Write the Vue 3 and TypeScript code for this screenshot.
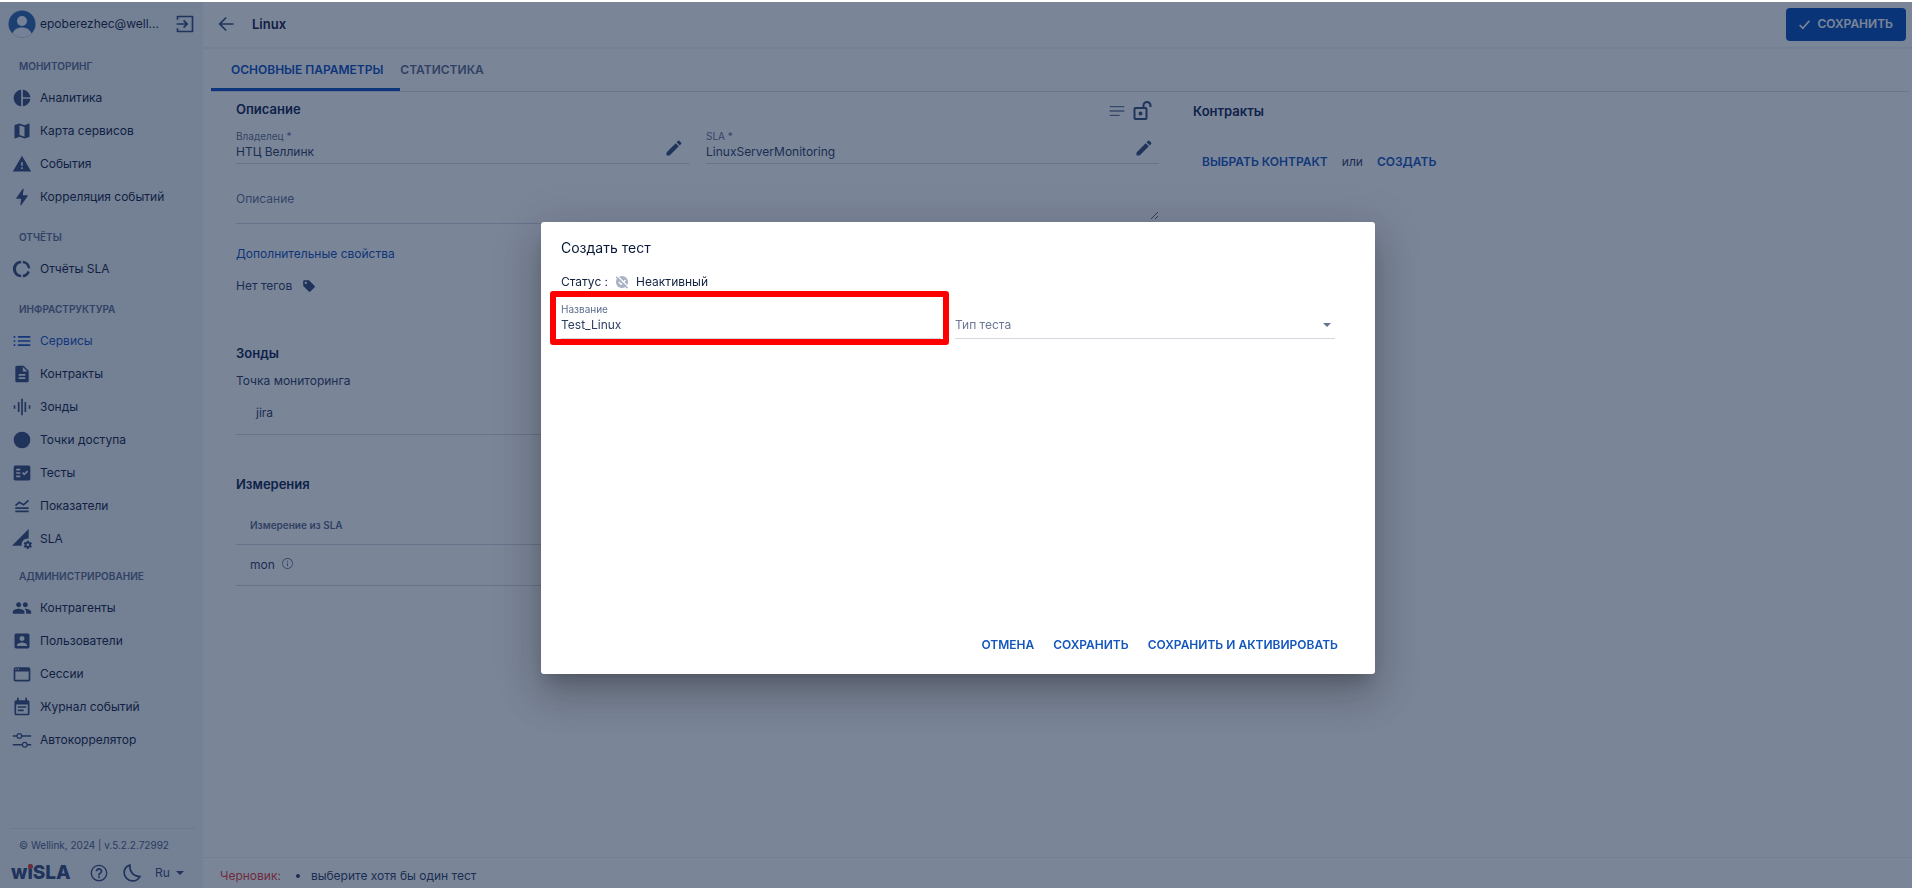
<script setup lang="ts">
import { ref } from 'vue'

interface NavItem {
  label: string
  icon: string
  active?: boolean
}
interface NavGroup {
  title: string
  items: NavItem[]
}

const icons: Record<string, string> = {
  pie: 'M11 2v20c-5.07-.5-9-4.79-9-10s3.93-9.5 9-10zm2.03 0v8.99H22c-.47-4.74-4.24-8.52-8.97-8.99zm0 11.01V22c4.74-.47 8.5-4.25 8.97-8.99h-8.97z',
  map: 'M20.5 3l-.16.03L15 5.1 9 3 3.36 4.9c-.21.07-.36.25-.36.48V20.5c0 .28.22.5.5.5l.16-.03L9 18.9l6 2.1 5.64-1.9c.21-.07.36-.25.36-.48V3.5c0-.28-.22-.5-.5-.5zM15 19l-6-2.11V5l6 2.11V19z',
  warning: 'M1 21h22L12 2 1 21zm12-3h-2v-2h2v2zm0-4h-2v-4h2v4z',
  bolt: 'M11 22h-1l1-8H5.500c-.6 0-.6-.4-.4-.8L13 2h1l-1 8h5.500c.5 0 .6.4.4.7z',
  donut: 'M11 2v3.050A7 7 0 0 0 11 18.950V22A10 10 0 0 1 11 2zM13 2A10 10 0 0 1 22 11h-3.050A7 7 0 0 0 13 5.050zM13 22v-3.050A7 7 0 0 0 18.500 14.500l2.900 1A10 10 0 0 1 13 22z',
  list: 'M2 13h2v-2H2v2zm0 5h2v-2H2v2zM2 8h2V6H2v2zm5 5h15v-2H7v2zm0 5h15v-2H7v2zM7 6v2h15V6H7z',
  doc: 'M14 2H6c-1.1 0-1.990.9-1.990 2L4 20c0 1.1.89 2 1.990 2H18c1.1 0 2-.9 2-2V8l-6-6zm2 16H8v-2h8v2zm0-4H8v-2h8v2zm-3-5V3.500L18.500 9H13z',
  eq: 'M7 18h2V6H7v12zm4 4h2V2h-2v20zm-9-8h2v-4H2v4zm13 4h2V6h-2v12zm5-8v4h2v-4h-2z',
  circle: 'M12 2a10 10 0 1 0 0 20 10 10 0 0 0 0-20z',
  check: 'M20 3H4c-1.1 0-2 .9-2 2v14c0 1.1.9 2 2 2h16c1.1 0 2-.9 2-2V5c0-1.1-.9-2-2-2zM10 17H5v-2h5v2zm0-4H5v-2h5v2zm0-4H5V7h5v2zm4.820 6L12 12.160l1.410-1.410 1.410 1.420L17.990 9l1.420 1.420L14.820 15z',
  metrics: 'M4 17.500h16v2H4zM4 13.500h16v2H4zM4.800 12.200 3.500 10.700 8.700 6.300l5 2.900L19.200 4.500l1.300 1.500-6.500 5.600-5.100-2.900z',
  signal: 'M18.990 11.500c.34 0 .67.03 1 .07L20 0 0 20h11.560c-.04-.33-.07-.66-.07-1 0-4.140 3.360-7.500 7.500-7.500zm3.710 7.990c.02-.16.04-.32.04-.49 0-.17-.01-.33-.04-.49l1.060-.83c.09-.08.12-.21.06-.32l-1-1.730c-.06-.11-.19-.15-.31-.11l-1.240.5c-.26-.2-.54-.37-.85-.49l-.19-1.320c-.01-.12-.12-.21-.24-.21h-2c-.12 0-.23.09-.25.21l-.19 1.320c-.3.13-.59.29-.85.49l-1.240-.5c-.11-.04-.24 0-.31.11l-1 1.730c-.06.11-.04.24.06.32l1.060.83c-.02.16-.03.32-.03.49 0 .17.01.33.03.49l-1.060.83c-.09.08-.12.21-.06.32l1 1.730c.06.11.19.15.31.11l1.240-.5c.26.2.54.37.85.49l.19 1.320c.02.12.12.21.25.21h2c.12 0 .23-.09.25-.21l.19-1.320c.3-.13.59-.29.84-.49l1.250.5c.11.04.24 0 .31-.11l1-1.730c.06-.11.03-.24-.06-.32l-1.070-.83zm-3.710 1.010c-.83 0-1.500-.67-1.500-1.500s.67-1.500 1.500-1.500 1.500.67 1.500 1.500-.67 1.500-1.500 1.500z',
  group: 'M16 11c1.660 0 2.990-1.340 2.990-3S17.660 5 16 5c-1.660 0-3 1.340-3 3s1.340 3 3 3zm-8 0c1.660 0 2.990-1.340 2.990-3S9.660 5 8 5C6.340 5 5 6.340 5 8s1.340 3 3 3zm0 2c-2.330 0-7 1.170-7 3.500V19h14v-2.500c0-2.330-4.670-3.500-7-3.500zm8 0c-.29 0-.62.02-.97.05 1.160.84 1.970 1.970 1.970 3.450V19h6v-2.500c0-2.330-4.670-3.500-7-3.500z',
  user: 'M3 5v14c0 1.1.89 2 2 2h14c1.1 0 2-.9 2-2V5c0-1.1-.9-2-2-2H5c-1.110 0-2 .9-2 2zm12 4c0 1.660-1.340 3-3 3s-3-1.340-3-3 1.340-3 3-3 3 1.340 3 3zm-9 8c0-2 4-3.100 6-3.100s6 1.1 6 3.100v1H6v-1z',
  window: 'M20 4H4c-1.100 0-2 .9-2 2v13c0 1.100.9 2 2 2h16c1.100 0 2-.9 2-2V6c0-1.100-.9-2-2-2zM4 5.500h1.500V7H4zM7 5.500h1.500V7H7zM20 19H4V9h16z',
  calendar: 'M19 4h-1V1h-2v3H8V1H6v3H5c-1.100 0-2 .9-2 2v14c0 1.100.9 2 2 2h14c1.100 0 2-.9 2-2V6c0-1.100-.9-2-2-2zm0 16H5V9h14zM7 11h10v2H7zM7 15h7v2H7z',
  sliders: 'M1 6.200h4.200a3.800 3.800 0 0 1 7.300 0H23v1.800H12.500a3.800 3.800 0 0 1-7.300 0H1zM8.800 5a2.100 2.100 0 1 0 0 4.200 2.100 2.100 0 0 0 0-4.200zM1 16.700h10.700a3.800 3.800 0 0 1 7.300 0h4v1.800h-4a3.800 3.800 0 0 1-7.300 0H1zM15.300 15.500a2.100 2.100 0 1 0 0 4.200 2.100 2.100 0 0 0 0-4.200z',
  logout: 'M3 2h18c.6 0 1 .4 1 1v18c0 .6-.4 1-1 1H3c-.6 0-1-.4-1-1v-4h2v3h16V4H4v3H2V3c0-.6.4-1 1-1zM2 11h10.200L9.600 8.400 11 7l5 5-5 5-1.400-1.400 2.600-2.600H2z',
  back: 'M21 11H6.830l6.090-6.090L11.500 3.500 3 12l8.500 8.500 1.410-1.410L6.830 13H21v-2z',
  edit: 'M3 17.250V21h3.750L17.810 9.940l-3.750-3.750L3 17.250zM20.710 7.040c.39-.39.39-1.020 0-1.410l-2.340-2.340c-.39-.39-1.020-.39-1.410 0l-1.830 1.830 3.750 3.750 1.830-1.830z',
  help: 'M11 18h2v-2h-2v2zm1-16C6.480 2 2 6.480 2 12s4.480 10 10 10 10-4.480 10-10S17.520 2 12 2zm0 18.400c-4.600 0-8.400-3.800-8.400-8.400s3.800-8.400 8.400-8.400 8.400 3.800 8.400 8.400-3.800 8.400-8.400 8.400zM12 6c-2.210 0-4 1.790-4 4h2c0-1.100.9-2 2-2s2 .9 2 2c0 2-3 1.750-3 5h2c0-2.250 3-2.500 3-5 0-2.210-1.790-4-4-4z',
  info: 'M11 17h2v-6h-2v6zm1-15C6.480 2 2 6.480 2 12s4.480 10 10 10 10-4.480 10-10S17.520 2 12 2zm0 18.500c-4.700 0-8.500-3.800-8.500-8.500S7.300 3.500 12 3.500s8.500 3.800 8.500 8.500-3.800 8.500-8.500 8.500zM11 9h2V7h-2v2z',
  tag: 'M21.410 11.580l-9-9C12.050 2.220 11.550 2 11 2H4c-1.100 0-2 .9-2 2v7c0 .55.22 1.050.59 1.420l9 9c.36.36.86.58 1.410.58.55 0 1.050-.22 1.410-.59l7-7c.37-.36.59-.86.59-1.410 0-.55-.23-1.060-.59-1.420zM6.500 8.500a2 2 0 1 1 0-4 2 2 0 0 1 0 4z',
}

const groups: NavGroup[] = [
  {
    title: 'МОНИТОРИНГ',
    items: [
      { label: 'Аналитика', icon: 'pie' },
      { label: 'Карта сервисов', icon: 'map' },
      { label: 'События', icon: 'warning' },
      { label: 'Корреляция событий', icon: 'bolt' },
    ],
  },
  { title: 'ОТЧЁТЫ', items: [{ label: 'Отчёты SLA', icon: 'donut' }] },
  {
    title: 'ИНФРАСТРУКТУРА',
    items: [
      { label: 'Сервисы', icon: 'list', active: true },
      { label: 'Контракты', icon: 'doc' },
      { label: 'Зонды', icon: 'eq' },
      { label: 'Точки доступа', icon: 'circle' },
      { label: 'Тесты', icon: 'check' },
      { label: 'Показатели', icon: 'metrics' },
      { label: 'SLA', icon: 'signal' },
    ],
  },
  {
    title: 'АДМИНИСТРИРОВАНИЕ',
    items: [
      { label: 'Контрагенты', icon: 'group' },
      { label: 'Пользователи', icon: 'user' },
      { label: 'Сессии', icon: 'window' },
      { label: 'Журнал событий', icon: 'calendar' },
      { label: 'Автокоррелятор', icon: 'sliders' },
    ],
  },
]

const owner = ref('НТЦ Веллинк')
const sla = ref('LinuxServerMonitoring')
const description = ref('')
const testName = ref('Test_Linux')
const testType = ref('')
</script>

<template>
  <div class="page">
    <aside class="sidebar">
      <div class="account">
        <svg class="avatar" viewBox="0 0 28 28" aria-hidden="true">
          <circle cx="14" cy="14" r="13.500" fill="#2f66ad" />
          <circle cx="14" cy="11" r="5" fill="#f2f5fa" />
          <path d="M4.500 23.500c1.500-4 5-6 9.500-6s8 2 9.500 6a13.500 13.500 0 0 1-19 0z" fill="#f2f5fa" />
        </svg>
        <span class="email">epoberezhec@well...</span>
        <button class="icon-btn" type="button" aria-label="Выйти">
          <svg class="icon" viewBox="0 0 24 24"><path :d="icons.logout" /></svg>
        </button>
      </div>

      <nav class="nav">
        <section v-for="g in groups" :key="g.title" class="nav-group">
          <h2 class="nav-title">{{ g.title }}</h2>
          <a v-for="i in g.items" :key="i.label" href="#" class="nav-item" :class="{ active: i.active }">
            <svg class="icon nav-icon" viewBox="0 0 24 24" fill-rule="evenodd" aria-hidden="true"><path :d="icons[i.icon]" /></svg>
            <span>{{ i.label }}</span>
          </a>
        </section>
      </nav>

      <footer class="side-footer">
        <p class="copyright">© Wellink, 2024 | v.5.2.2.72992</p>
        <div class="tools">
          <span class="logo">w<span class="logo-i">i</span>SLA</span>
          <button class="icon-btn" type="button" aria-label="Справка">
            <svg class="icon" viewBox="0 0 24 24"><path :d="icons.help" /></svg>
          </button>
          <button class="icon-btn moon" type="button" aria-label="Тёмная тема">
            <svg class="icon outline" viewBox="0 0 24 24"><path d="M9.500 2.600C8.700 9.500 13 15.800 21.500 16.300 19.500 19.800 16 21.600 12.500 21.500 7 21.300 2.600 17 2.600 11.700c0-4.100 2.800-7.800 6.900-9.100z" /></svg>
          </button>
          <button class="lang" type="button">Ru<span class="caret"></span></button>
        </div>
      </footer>
    </aside>

    <main class="main">
      <header class="topbar">
        <button class="icon-btn" type="button" aria-label="Назад">
          <svg class="icon back" viewBox="0 0 24 24"><path :d="icons.back" /></svg>
        </button>
        <h1 class="page-title">Linux</h1>
        <button class="save" type="button">
          <svg class="save-icon" viewBox="0 0 24 24" aria-hidden="true"><path d="M3 13l6 6L21 5" /></svg>СОХРАНИТЬ
        </button>
      </header>

      <div class="tabs" role="tablist">
        <button class="tab selected" role="tab" aria-selected="true" type="button">ОСНОВНЫЕ ПАРАМЕТРЫ</button>
        <button class="tab" role="tab" aria-selected="false" type="button">СТАТИСТИКА</button>
      </div>

      <div class="content">
        <div class="details">
          <div class="section-head">
            <h2 class="section-title">Описание</h2>
            <div class="section-actions">
              <button class="icon-btn" type="button" aria-label="Список">
                <svg class="icon muted" viewBox="0 0 24 24"><path d="M1 4.500h22v2H1zM1 11h22v2H1zM1 17.500h15v2H1z" /></svg>
              </button>
              <button class="icon-btn" type="button" aria-label="Разблокировано">
                <svg class="lock outline" viewBox="0 0 20 20"><rect x="1.500" y="7" width="12" height="11" rx="1" /><path d="M10.500 7V4.500a3.500 3.500 0 0 1 7 0V6" /><circle cx="7.500" cy="12.500" r="1" /></svg>
              </button>
            </div>
          </div>

          <div class="pair">
            <div class="field">
              <label for="owner">Владелец *</label>
              <input id="owner" v-model="owner" type="text" />
              <button class="icon-btn edit" type="button" aria-label="Изменить владельца">
                <svg viewBox="0 0 24 24"><path :d="icons.edit" /></svg>
              </button>
            </div>
            <div class="field">
              <label for="sla">SLA *</label>
              <input id="sla" v-model="sla" type="text" />
              <button class="icon-btn edit" type="button" aria-label="Изменить SLA">
                <svg viewBox="0 0 24 24"><path :d="icons.edit" /></svg>
              </button>
            </div>
          </div>

          <div class="field description">
            <textarea v-model="description" aria-label="Описание" placeholder="Описание"></textarea>
          </div>

          <a href="#" class="more">Дополнительные свойства</a>
          <div class="tags">
            <span>Нет тегов</span>
            <button class="icon-btn" type="button" aria-label="Добавить тег">
              <svg class="tag" viewBox="0 0 24 24" fill-rule="evenodd"><path :d="icons.tag" /></svg>
            </button>
          </div>

          <section class="probes">
            <h2 class="section-title">Зонды</h2>
            <p class="probe-label">Точка мониторинга</p>
            <p class="probe">jira</p>
          </section>

          <section>
            <h2 class="section-title">Измерения</h2>
            <table class="measures">
              <thead>
                <tr><th scope="col">Измерение из SLA</th></tr>
              </thead>
              <tbody>
                <tr>
                  <td>
                    <div class="measure">
                      mon<svg class="info" viewBox="0 0 24 24" aria-hidden="true"><path :d="icons.info" /></svg>
                    </div>
                  </td>
                </tr>
              </tbody>
            </table>
          </section>
        </div>

        <section class="contracts">
          <h2 class="section-title">Контракты</h2>
          <div class="contract-actions">
            <button class="text-btn" type="button">ВЫБРАТЬ КОНТРАКТ</button>
            <span>или</span>
            <button class="text-btn" type="button">СОЗДАТЬ</button>
          </div>
        </section>
      </div>

      <footer class="draft">
        <span class="draft-label">Черновик:</span>
        <ul>
          <li>выберите хотя бы один тест</li>
        </ul>
      </footer>
    </main>

    <div class="backdrop">
      <div class="dialog" role="dialog" aria-modal="true" aria-labelledby="dialog-title">
        <h2 id="dialog-title" class="dialog-title">Создать тест</h2>
        <div class="status">
          <span>Статус :</span>
          <svg class="status-icon" viewBox="0 0 24 24" aria-hidden="true">
            <circle cx="12" cy="12" r="10.500" fill="#a9b3c4" />
            <path d="M6.500 12l4 4L18 8.500" fill="none" stroke="#fff" stroke-width="2.400" />
            <path d="M4 1.500L23 20.500" stroke="#fff" stroke-width="2.400" />
            <path d="M2 3l19.500 19.500" stroke="#a9b3c4" stroke-width="2.600" />
          </svg>
          <span>Неактивный</span>
        </div>
        <div class="dialog-fields">
          <div class="field highlighted">
            <label for="test-name">Название</label>
            <input id="test-name" v-model="testName" type="text" />
          </div>
          <div class="field select-field">
            <select v-model="testType" aria-label="Тип теста">
              <option value="" disabled>Тип теста</option>
            </select>
            <span class="caret"></span>
          </div>
        </div>
        <div class="dialog-actions">
          <button class="text-btn" type="button">ОТМЕНА</button>
          <button class="text-btn" type="button">СОХРАНИТЬ</button>
          <button class="text-btn" type="button">СОХРАНИТЬ И АКТИВИРОВАТЬ</button>
        </div>
      </div>
    </div>
  </div>
</template>

<style>
body {
  margin: 0;
  background: #fff;
}
</style>

<style scoped>
* {
  box-sizing: border-box;
}
.page {
  display: flex;
  min-height: 100vh;
  padding-top: 2px;
  font-family: Inter, 'Liberation Sans', sans-serif;
  font-size: 12px;
  line-height: 16px;
  color: #2b3d63;
}
h1,
h2,
p,
ul {
  margin: 0;
  padding: 0;
}
button,
input,
select,
textarea {
  font: inherit;
  color: inherit;
  border: 0;
  background: none;
  padding: 0;
  margin: 0;
  outline: 0;
}
a {
  color: inherit;
  text-decoration: none;
}
svg {
  display: block;
  fill: currentColor;
}
.icon-btn {
  display: flex;
  color: #344a78;
}
.icon {
  width: 20px;
  height: 20px;
}
.outline {
  fill: none;
  stroke: currentColor;
  stroke-width: 2;
}

/* Sidebar */
.sidebar {
  display: flex;
  flex-direction: column;
  flex: 0 0 203px;
  background: #f0f3f7;
  color: #101f40;
}
.account {
  display: flex;
  align-items: center;
  height: 44px;
  padding: 0 8px;
}
.avatar {
  width: 28px;
  height: 28px;
}
.email {
  flex: 1;
  margin-left: 4px;
}
.nav {
  padding-top: 5px;
}
.nav-group {
  margin-bottom: 9px;
}
.nav-group:nth-child(3) {
  margin-bottom: 6px;
}
.nav-title {
  padding: 7px 0 7px 19px;
  font-size: 10px;
  font-weight: 600;
  color: #5a6a8c;
}
.nav-item {
  display: flex;
  align-items: center;
  gap: 8px;
  height: 33px;
  padding-left: 12px;
}
.nav-icon {
  color: #344a78;
}
.nav-item.active,
.active .nav-icon {
  color: #1553bd;
}
.side-footer {
  margin-top: auto;
  padding: 0 7px 3px 10px;
}
.copyright {
  padding: 8px 9px;
  border-top: 1px solid #dfe4ee;
  font-size: 10px;
  color: #4c5d82;
}
.tools {
  display: flex;
  align-items: center;
  height: 24px;
  color: #344a78;
}
.logo {
  width: 79px;
  padding-left: 1px;
  font-size: 19px;
  font-weight: 800;
  line-height: 24px;
}
.logo-i {
  position: relative;
}
.logo-i::after {
  content: '';
  position: absolute;
  left: 1px;
  top: 3px;
  width: 5px;
  height: 5px;
  border-radius: 50%;
  background: #e53935;
}
.moon {
  margin-left: 13px;
}
.lang {
  display: flex;
  align-items: center;
  gap: 6px;
  margin-left: 13px;
}
.caret {
  border: 4px solid transparent;
  border-top-color: currentColor;
  border-bottom: 0;
}

/* Main area */
.main {
  display: flex;
  flex-direction: column;
  flex: 1;
  min-width: 0;
}
.topbar {
  display: flex;
  align-items: center;
  height: 47px;
  padding: 0 6px 1px 13px;
  border-bottom: 2px solid #eef1f6;
}
.page-title {
  flex: 1;
  margin-left: 16px;
  font-size: 13px;
  font-weight: 600;
  color: #10203f;
}
.save {
  display: flex;
  align-items: center;
  gap: 6px;
  height: 33px;
  padding: 0 13px 0 12px;
  border-radius: 4px;
  background: #064cb8;
  color: #fff;
  font-weight: 600;
}
.save-icon {
  width: 13px;
  height: 13px;
  fill: none;
  stroke: currentColor;
  stroke-width: 3;
}
.tabs {
  display: flex;
  margin: 0 3px 0 8px;
  border-bottom: 1px solid #d9dce4;
}
.tab {
  height: 42px;
  padding: 0;
  border-bottom: 3px solid transparent;
  padding-top: 2px;
  font-weight: 600;
  color: #5a6a8c;
}
.tab.selected {
  padding: 2px 17px 0 20px;
  border-bottom-color: #0a4fbe;
  color: #0a4fbe;
}
.content {
  display: grid;
  grid-template-columns: minmax(0, 923fr) minmax(0, 719fr);
  column-gap: 34px;
  flex: 1;
  padding-left: 33px;
}
.section-title {
  font-size: 13px;
  font-weight: 600;
  line-height: 20px;
  color: #0d2250;
}
.section-head {
  display: flex;
  justify-content: space-between;
  padding: 7px 6px 0 0;
}
.section-actions {
  display: flex;
  align-items: center;
  gap: 8px;
  padding-top: 2px;
}
.muted {
  width: 16px;
  height: 16px;
  color: #6a7895;
}
.lock {
  width: 20px;
  height: 20px;
}
.pair {
  display: grid;
  grid-template-columns: 1fr 1fr;
  gap: 17px;
  margin-top: 7px;
}
.field {
  position: relative;
  border-bottom: 1px solid #d3d7e0;
}
.field label {
  display: block;
  font-size: 10px;
  line-height: 16px;
  color: #5f6f90;
}
.field input {
  display: block;
  width: 100%;
  height: 16px;
  margin-bottom: 3px;
}
.edit {
  position: absolute;
  right: 5px;
  bottom: 5px;
}
.edit svg {
  width: 20px;
  height: 20px;
}
.description {
  margin-top: 27px;
  padding-bottom: 3px;
}
.description textarea {
  display: block;
  width: 100%;
  height: 29px;
  resize: vertical;
}
.description textarea::placeholder {
  color: #5f6f90;
  opacity: 1;
}
.more {
  display: inline-block;
  margin-top: 22px;
  color: #0d4fb5;
}
.tags {
  display: flex;
  align-items: center;
  gap: 10px;
  margin-top: 16px;
}
.tag {
  width: 14px;
  height: 14px;
}
.probes {
  margin: 49px 0 39px;
}
.probe-label {
  margin-top: 10px;
}
.probe {
  padding: 16px 20px 13px;
  border-bottom: 1px solid #d3d7e0;
}
.measures {
  width: 100%;
  border-collapse: collapse;
}
.measures th {
  height: 50px;
  padding: 12px 14px 0;
  font-size: 10px;
  font-weight: 600;
  text-align: left;
  color: #5a6a8c;
  border-bottom: 1px solid #d3d7e0;
}
.measures td {
  height: 41px;
  padding: 0 14px;
  border-bottom: 1px solid #d3d7e0;
}
.measure {
  display: flex;
  gap: 6px;
}
.info {
  width: 13px;
  height: 13px;
  color: #6a7895;
}
.contracts {
  padding-top: 9px;
}
.contract-actions {
  display: flex;
  align-items: center;
  gap: 14px;
  margin-top: 33px;
  padding-left: 9px;
}
.text-btn {
  font-weight: 600;
  color: #1356bd;
}
.draft {
  display: flex;
  align-items: center;
  height: 31px;
  padding: 6px 17px 0;
  border-top: 1px solid #edf0f5;
}
.draft-label {
  color: #e53935;
}
.draft ul {
  padding-left: 30px;
}

/* Modal */
.backdrop {
  position: fixed;
  inset: 2px 0 0;
  display: flex;
  align-items: center;
  justify-content: center;
  padding: 6px 0 0 4px;
  background: rgba(15, 33, 68, 0.55);
}
.dialog {
  display: flex;
  flex-direction: column;
  width: 834px;
  max-width: 90%;
  min-height: 452px;
  padding: 16px 20px 21px;
  border-radius: 3px;
  background: #fff;
  box-shadow:
    0 11px 15px -7px rgba(0, 0, 0, 0.2),
    0 24px 38px 3px rgba(0, 0, 0, 0.14),
    0 9px 46px 8px rgba(0, 0, 0, 0.12);
}
.dialog-title {
  font-size: 14px;
  font-weight: 400;
  line-height: 20px;
  color: #0b1a3a;
}
.status {
  display: flex;
  align-items: center;
  gap: 7px;
  margin-top: 16px;
  color: #12213f;
}
.status-icon {
  width: 14px;
  height: 14px;
}
.dialog-fields {
  display: grid;
  grid-template-columns: 1fr 1fr;
  gap: 14px;
  margin: 11px 20px 0 0;
}
.dialog-fields input {
  margin-bottom: 5px;
}
.highlighted::after {
  content: '';
  position: absolute;
  inset: -10px -8px -7px -11px;
  border: 6px solid #f00;
  border-radius: 3px;
  pointer-events: none;
}
.select-field {
  display: flex;
  align-items: flex-end;
}
.select-field select {
  width: 100%;
  height: 16px;
  margin-bottom: 5px;
  appearance: none;
  color: #6b7893;
}
.select-field .caret {
  position: absolute;
  right: 4px;
  bottom: 11px;
  color: #66738f;
  pointer-events: none;
}
.dialog-actions {
  display: flex;
  justify-content: flex-end;
  gap: 19px;
  margin-top: auto;
  padding-right: 17px;
}
</style>
